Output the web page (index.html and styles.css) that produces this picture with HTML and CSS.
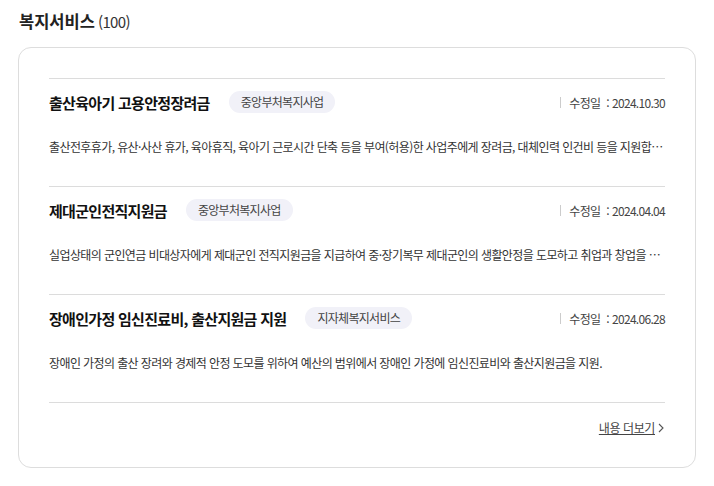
FILE: index.html
```html
<!DOCTYPE html>
<html lang="ko">
<head>
<meta charset="utf-8">
<link rel="stylesheet" href="styles.css">
</head>
<body>
<div class="page">
  <h2 class="heading">복지서비스<span class="count">(100)</span></h2>
  <div class="card">
    <ul class="list">
      <li class="item">
        <div class="item-top">
          <strong class="item-title">출산육아기 고용안정장려금</strong>
          <span class="badge">중앙부처복지사업</span>
          <span class="date"><span class="date-label">수정일</span><span class="colon">:</span>2024.10.30</span>
        </div>
        <p class="desc">출산전후휴가, 유산·사산 휴가, 육아휴직, 육아기 근로시간 단축 등을 부여(허용)한 사업주에게 장려금, 대체인력 인건비 등을 지원합니다.</p>
      </li>
      <li class="item">
        <div class="item-top">
          <strong class="item-title">제대군인전직지원금</strong>
          <span class="badge">중앙부처복지사업</span>
          <span class="date"><span class="date-label">수정일</span><span class="colon">:</span>2024.04.04</span>
        </div>
        <p class="desc">실업상태의 군인연금 비대상자에게 제대군인 전직지원금을 지급하여 중·장기복무 제대군인의 생활안정을 도모하고 취업과 창업을 지원합니다.</p>
      </li>
      <li class="item">
        <div class="item-top">
          <strong class="item-title">장애인가정 임신진료비, 출산지원금 지원</strong>
          <span class="badge">지자체복지서비스</span>
          <span class="date"><span class="date-label">수정일</span><span class="colon">:</span>2024.06.28</span>
        </div>
        <p class="desc">장애인 가정의 출산 장려와 경제적 안정 도모를 위하여 예산의 범위에서 장애인 가정에 임신진료비와 출산지원금을 지원.</p>
      </li>
    </ul>
    <div class="more-row">
      <a class="more" href="#">내용 더보기</a>
      <svg class="chev" width="6" height="10" viewBox="0 0 6 10"><path d="M1 1l4 4-4 4" fill="none" stroke="#555" stroke-width="1.1"/></svg>
    </div>
  </div>
</div>
</body>
</html>
```
FILE: styles.css
```css
* { box-sizing: border-box; }
html, body { margin: 0; padding: 0; background: #fff; }
body {
  font-family: "Noto Sans CJK KR", "Noto Sans", sans-serif;
  color: #222;
}
.page { padding: 10px 18px 0 18px; width: 714px; }
.heading {
  margin: 0 0 0 1px;
  font-size: 16.5px;
  font-weight: 700;
  line-height: 22px;
  color: #222;
  letter-spacing: 0;
}
.count {
  font-size: 15px;
  font-weight: 400;
  margin-left: 3px;
  letter-spacing: -0.6px;
  color: #333;
}
.card {
  margin-top: 14px;
  width: 678px;
  border: 1px solid #ddd;
  border-radius: 13px;
  padding: 30px 30px 30px 30px;
}
.list { list-style: none; margin: 0; padding: 0; }
.item {
  border-top: 1px solid #dcdcdc;
  height: 108px;
  padding-top: 12px;
}
.item:last-child { border-bottom: 1px solid #dcdcdc; height: 109px; }
.item-top {
  display: flex;
  align-items: center;
  height: 22px;
}
.item-title {
  font-size: 15px;
  font-weight: 700;
  color: #111;
  letter-spacing: -0.7px;
}
.badge {
  margin-left: 19px;
  background: #f1f1f8;
  border-radius: 11px;
  height: 22px;
  line-height: 22px;
  padding: 0 12px;
  font-size: 12px;
  color: #444;
  letter-spacing: -0.7px;
}
.date {
  margin-left: auto;
  font-size: 12px;
  color: #444;
  display: flex;
  align-items: center;
  letter-spacing: -0.7px;
}
.date::before {
  content: "";
  width: 1px;
  height: 11px;
  background: #ccc;
  margin-right: 8px;
}
.colon { margin: 0 3px 0 6px; }
.desc {
  margin: 25px 0 0 0;
  font-size: 12px;
  line-height: 18px;
  color: #333;
  white-space: nowrap;
  overflow: hidden;
  text-overflow: ellipsis;
  letter-spacing: -0.6px;
}
.more-row {
  display: flex;
  justify-content: flex-end;
  align-items: center;
  margin-top: 16px;
  padding-right: 1px;
  gap: 3px;
}
.more {
  font-size: 12px;
  color: #444;
  text-decoration: underline;
  letter-spacing: -0.4px;
  line-height: 18px;
}
.chev { display: block; }
```
